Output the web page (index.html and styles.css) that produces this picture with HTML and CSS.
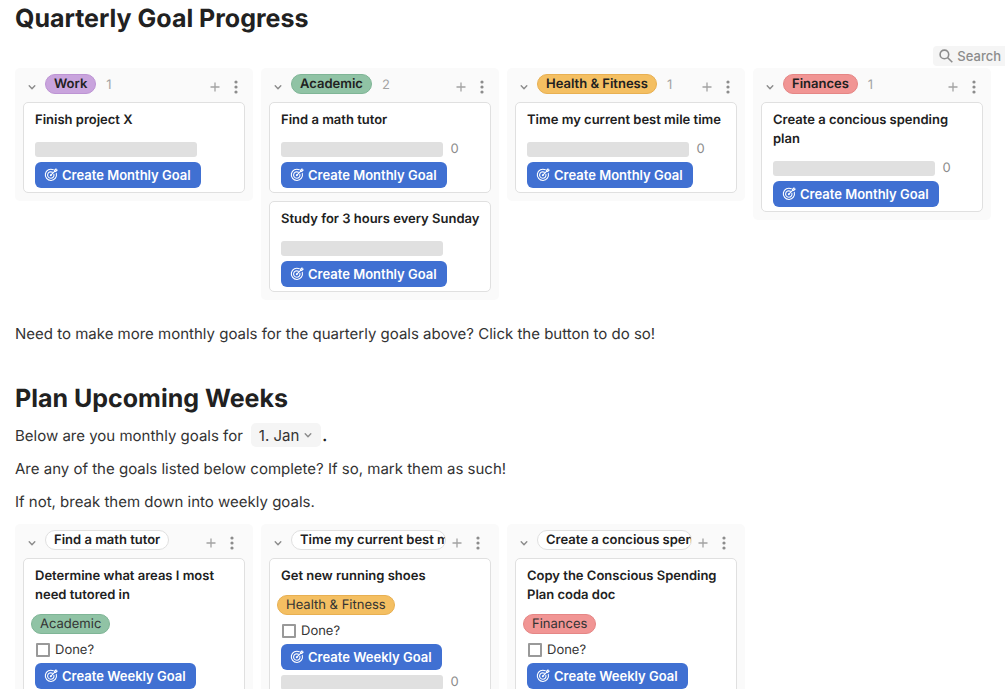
FILE: index.html
```html
<!DOCTYPE html>
<html lang="en">
<head>
  <meta charset="UTF-8">
  <meta name="viewport" content="width=device-width, initial-scale=1.0">
  <title>Goal Planner</title>
  <link rel="stylesheet" href="styles.css">
</head>
<body>
  <!-- shared icons -->
  <svg class="sprite" aria-hidden="true">
    <symbol id="chevron" viewBox="0 0 10 10"><path d="M2.2 3.8 5 6.8 7.8 3.8" fill="none" stroke="currentColor" stroke-width="1.4" stroke-linecap="round" stroke-linejoin="round"/></symbol>
    <symbol id="plus" viewBox="0 0 10 10"><path d="M5 .5v9M.5 5h9" fill="none" stroke="currentColor" stroke-width="1.3"/></symbol>
    <symbol id="dots" viewBox="0 0 4 14"><circle cx="2" cy="2" r="1.6" fill="currentColor"/><circle cx="2" cy="7" r="1.6" fill="currentColor"/><circle cx="2" cy="12" r="1.6" fill="currentColor"/></symbol>
    <symbol id="target" viewBox="0 0 14 14">
      <g fill="none" stroke="currentColor" stroke-width="1.1" stroke-linecap="round" stroke-linejoin="round">
        <path d="M9.3 1.8A5.6 5.6 0 1 0 12.3 5.4"/>
        <path d="M8.4 4.3A3.2 3.2 0 1 0 9.9 6.3"/>
        <path d="M6.8 7.2 10.6 3.4M10.6 3.4V2.2L12 .9v1.2h1.2L11.8 3.4z"/>
      </g>
      <circle cx="6.8" cy="7.2" r="1" fill="currentColor"/>
    </symbol>
    <symbol id="search" viewBox="0 0 14 14"><g fill="none" stroke="currentColor" stroke-width="1.6"><circle cx="5.4" cy="5.4" r="4.3"/><path d="m8.5 8.5 4.8 4.8"/></g></symbol>
  </svg>

  <main class="page">
    <h1>Quarterly Goal Progress</h1>

    <div class="toolbar">
      <button class="search-btn"><svg class="icon-search"><use href="#search"/></svg>Search</button>
    </div>

    <section class="board">
      <div class="column">
        <header class="column-head">
          <button class="icon-btn" aria-label="Collapse"><svg class="icon-chevron"><use href="#chevron"/></svg></button>
          <div class="group"><span class="pill purple">Work</span><span class="count">1</span></div>
          <button class="icon-btn add" aria-label="Add"><svg class="icon-plus"><use href="#plus"/></svg></button>
          <button class="icon-btn" aria-label="Options"><svg class="icon-dots"><use href="#dots"/></svg></button>
        </header>
        <article class="card">
          <h3>Finish project X</h3>
          <div class="progress"><span class="track"></span></div>
          <button class="goal-btn"><svg class="icon-target"><use href="#target"/></svg>Create Monthly Goal</button>
        </article>
      </div>

      <div class="column">
        <header class="column-head">
          <button class="icon-btn" aria-label="Collapse"><svg class="icon-chevron"><use href="#chevron"/></svg></button>
          <div class="group"><span class="pill green">Academic</span><span class="count">2</span></div>
          <button class="icon-btn add" aria-label="Add"><svg class="icon-plus"><use href="#plus"/></svg></button>
          <button class="icon-btn" aria-label="Options"><svg class="icon-dots"><use href="#dots"/></svg></button>
        </header>
        <article class="card">
          <h3>Find a math tutor</h3>
          <div class="progress"><span class="track"></span><span>0</span></div>
          <button class="goal-btn"><svg class="icon-target"><use href="#target"/></svg>Create Monthly Goal</button>
        </article>
        <article class="card">
          <h3>Study for 3 hours every Sunday</h3>
          <div class="progress"><span class="track"></span></div>
          <button class="goal-btn"><svg class="icon-target"><use href="#target"/></svg>Create Monthly Goal</button>
        </article>
      </div>

      <div class="column">
        <header class="column-head">
          <button class="icon-btn" aria-label="Collapse"><svg class="icon-chevron"><use href="#chevron"/></svg></button>
          <div class="group"><span class="pill yellow">Health &amp; Fitness</span><span class="count">1</span></div>
          <button class="icon-btn add" aria-label="Add"><svg class="icon-plus"><use href="#plus"/></svg></button>
          <button class="icon-btn" aria-label="Options"><svg class="icon-dots"><use href="#dots"/></svg></button>
        </header>
        <article class="card">
          <h3>Time my current best mile time</h3>
          <div class="progress"><span class="track"></span><span>0</span></div>
          <button class="goal-btn"><svg class="icon-target"><use href="#target"/></svg>Create Monthly Goal</button>
        </article>
      </div>

      <div class="column">
        <header class="column-head">
          <button class="icon-btn" aria-label="Collapse"><svg class="icon-chevron"><use href="#chevron"/></svg></button>
          <div class="group"><span class="pill red">Finances</span><span class="count">1</span></div>
          <button class="icon-btn add" aria-label="Add"><svg class="icon-plus"><use href="#plus"/></svg></button>
          <button class="icon-btn" aria-label="Options"><svg class="icon-dots"><use href="#dots"/></svg></button>
        </header>
        <article class="card">
          <h3>Create a concious spending plan</h3>
          <div class="progress"><span class="track"></span><span>0</span></div>
          <button class="goal-btn"><svg class="icon-target"><use href="#target"/></svg>Create Monthly Goal</button>
        </article>
      </div>
    </section>

    <p class="note">Need to make more monthly goals for the quarterly goals above? Click the button to do so!</p>

    <h2>Plan Upcoming Weeks</h2>
    <div class="month-line">
      <label for="month">Below are you monthly goals for</label>
      <span class="month-box">
        <select id="month">
          <option>1. Jan</option>
          <option>2. Feb</option>
          <option>3. Mar</option>
        </select>
        <svg class="icon-chevron"><use href="#chevron"/></svg>
      </span>
      <b>.</b>
    </div>
    <p>Are any of the goals listed below complete? If so, mark them as such!</p>
    <p>If not, break them down into weekly goals.</p>

    <section class="board weekly">
      <div class="column">
        <header class="column-head">
          <button class="icon-btn" aria-label="Collapse"><svg class="icon-chevron"><use href="#chevron"/></svg></button>
          <div class="group"><span class="pill plain">Find a math tutor</span></div>
          <button class="icon-btn add" aria-label="Add"><svg class="icon-plus"><use href="#plus"/></svg></button>
          <button class="icon-btn" aria-label="Options"><svg class="icon-dots"><use href="#dots"/></svg></button>
        </header>
        <article class="card">
          <h3>Determine what areas I most need tutored in</h3>
          <span class="pill tag green">Academic</span>
          <label class="done"><input type="checkbox">Done?</label>
          <button class="goal-btn"><svg class="icon-target"><use href="#target"/></svg>Create Weekly Goal</button>
          <div class="progress"><span class="track"></span></div>
        </article>
      </div>

      <div class="column">
        <header class="column-head">
          <button class="icon-btn" aria-label="Collapse"><svg class="icon-chevron"><use href="#chevron"/></svg></button>
          <div class="group"><span class="pill plain">Time my current best mile time</span></div>
          <button class="icon-btn add" aria-label="Add"><svg class="icon-plus"><use href="#plus"/></svg></button>
          <button class="icon-btn" aria-label="Options"><svg class="icon-dots"><use href="#dots"/></svg></button>
        </header>
        <article class="card">
          <h3>Get new running shoes</h3>
          <span class="pill tag yellow">Health &amp; Fitness</span>
          <label class="done"><input type="checkbox">Done?</label>
          <button class="goal-btn"><svg class="icon-target"><use href="#target"/></svg>Create Weekly Goal</button>
          <div class="progress"><span class="track"></span><span>0</span></div>
        </article>
      </div>

      <div class="column">
        <header class="column-head">
          <button class="icon-btn" aria-label="Collapse"><svg class="icon-chevron"><use href="#chevron"/></svg></button>
          <div class="group"><span class="pill plain">Create a concious spending plan</span></div>
          <button class="icon-btn add" aria-label="Add"><svg class="icon-plus"><use href="#plus"/></svg></button>
          <button class="icon-btn" aria-label="Options"><svg class="icon-dots"><use href="#dots"/></svg></button>
        </header>
        <article class="card">
          <h3>Copy the Conscious Spending Plan coda doc</h3>
          <span class="pill tag red">Finances</span>
          <label class="done"><input type="checkbox">Done?</label>
          <button class="goal-btn"><svg class="icon-target"><use href="#target"/></svg>Create Weekly Goal</button>
          <div class="progress"><span class="track"></span></div>
        </article>
      </div>
    </section>
  </main>
</body>
</html>
```
FILE: styles.css
```css
* { box-sizing: border-box; }
body { margin: 0; font-family: Inter, sans-serif; font-size: 15px; line-height: 21px; color: #333; background: #fff; text-rendering: geometricPrecision; }
button, select { font: inherit; color: inherit; border: none; background: none; padding: 0; cursor: pointer; }
svg { display: block; flex: none; }
.sprite { position: absolute; width: 0; height: 0; }

.page { height: 100vh; overflow-y: auto; scrollbar-width: none; padding: 2px 14px 0 15px; }
h1, h2 { margin: 0; font-size: 25px; line-height: 34px; font-weight: 700; color: #212121; }
p { margin: 0 0 12px; }

.toolbar { display: flex; justify-content: flex-end; margin: 10px -14px 2px 0; }
.search-btn { display: flex; align-items: center; gap: 4px; height: 20px; padding: 0 4px 0 6px; border-radius: 4px 0 0 4px; background: #f5f5f5; color: #8c8c8c; font-size: 13px; font-weight: 500; }
.icon-search { width: 14px; height: 14px; }

/* boards */
.board { display: grid; grid-template-columns: repeat(4, minmax(0, 1fr)); gap: 8px; align-items: start; }
.column { display: flex; flex-direction: column; gap: 8px; padding: 0 8px 8px; border-radius: 5px; background: #fafafa; }
.column-head { display: flex; align-items: center; height: 34px; margin-bottom: -8px; padding-top: 4px; color: #8c8c8c; }
.group { display: flex; flex: 1; align-items: center; gap: 10px; min-width: 0; margin: 0 6px 6px 4px; }
.icon-btn { display: flex; align-items: center; justify-content: center; flex: none; width: 18px; height: 20px; }
.add { margin-right: 3px; color: #a3a3a3; }
.icon-chevron { width: 10px; height: 10px; color: #8c8c8c; }
.icon-plus { width: 10px; height: 10px; }
.icon-dots { width: 4px; height: 14px; }

.pill { height: 20px; padding: 0 8px; border: 1px solid; border-radius: 10px; font-size: 13px; line-height: 18px; font-weight: 600; color: #212121; white-space: nowrap; }
.purple { background: #c9a4dd; border-color: #bd94d4; }
.green { background: #90c3a5; border-color: #7fb596; }
.yellow { background: #f4bf62; border-color: #e8b052; }
.red { background: #f19594; border-color: #e58685; }
.plain { overflow: hidden; background: #fff; border-color: #e0e0e0; }
.count { padding-top: 2px; font-size: 13px; color: #a3a3a3; }

.card { display: flex; flex-direction: column; align-items: flex-start; padding: 8px 6px 4px 11px; border: 1px solid #e0e0e0; border-radius: 5px; background: #fff; }
h3 { margin: 0; font-size: 13px; line-height: 19px; font-weight: 600; color: #212121; }
.progress { display: flex; align-items: center; gap: 7px; width: 100%; height: 15px; margin: 12px 0 5px; font-size: 13px; color: #8c8c8c; }
.track { width: 80%; height: 15px; border-radius: 3px; background: #e0e0e0; }
.goal-btn { display: flex; align-items: center; gap: 4px; height: 26px; padding: 0 10px 0 9px; border-radius: 6px; background: #4070d2; color: #fff; font-size: 13px; font-weight: 600; white-space: nowrap; }
.icon-target { width: 14px; height: 14px; }

.note { margin: 23px 0 38px; }
.month-line { display: flex; align-items: center; height: 24px; margin: 7px 0 11px; }
.month-line b { margin-left: 1px; color: #212121; }
.month-box { display: flex; align-items: center; gap: 4px; height: 24px; margin-left: 8px; padding: 0 8px; border-radius: 5px; background: #f5f5f5; }
.month-box select { appearance: none; field-sizing: content; }

.weekly .column-head { padding-right: 4px; }
.weekly .group { margin-right: 2px; }
.weekly .tag { margin: 9px 0 0 -4px; font-weight: 400; color: #333; }
.done { display: flex; align-items: center; gap: 5px; height: 20px; margin: 6px 0 3px; font-size: 13px; }
.done input { appearance: none; width: 14px; height: 14px; margin: 0 0 0 1px; border: 2px solid #999; border-radius: 1px; background: #fff; }
.weekly .progress { margin-top: 5px; }
```
